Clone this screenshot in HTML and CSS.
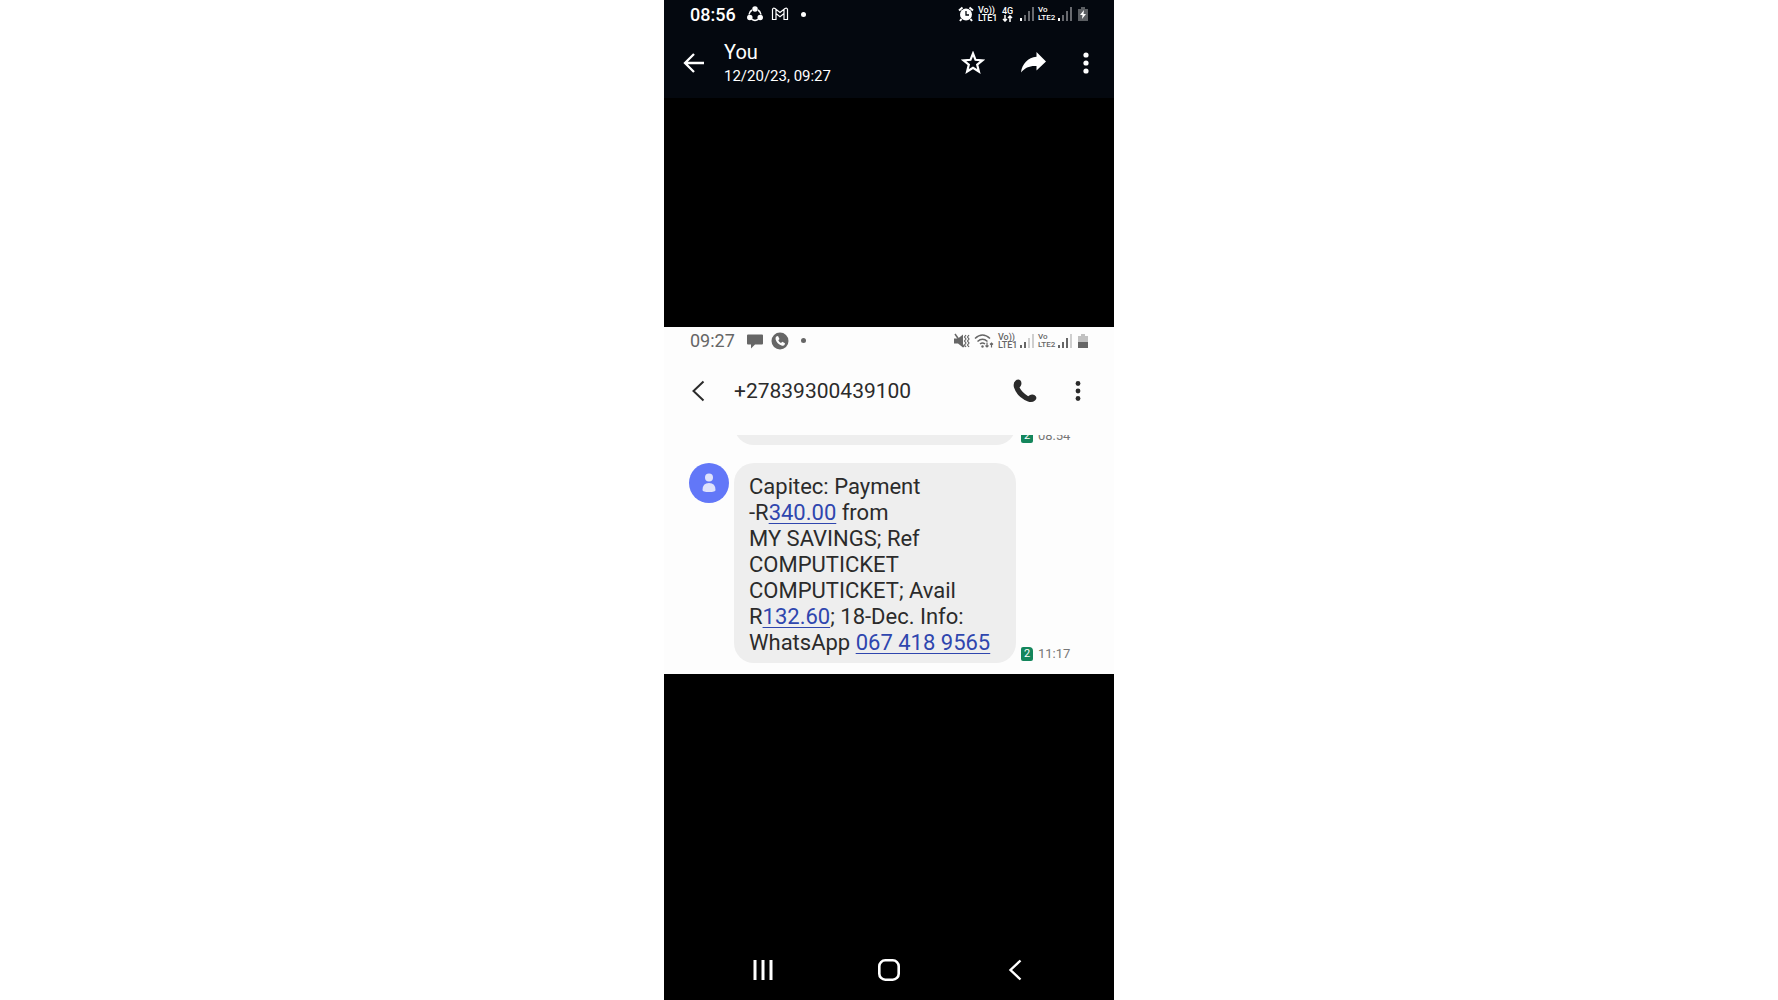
FILE: index.html
```html
<!DOCTYPE html>
<html lang="en">
<head>
  <meta charset="UTF-8">
  <meta name="viewport" content="width=device-width, initial-scale=1.0">
  <title>You</title>
  <link rel="stylesheet" href="styles.css">
</head>
<body>
  <main class="phone">
    <header class="viewer-header">
      <div class="status-bar">
        <div class="status-left">
          <span class="clock">08:56</span>
          <svg width="16" height="16" viewBox="0 0 16 16" fill="none" stroke="currentColor" stroke-width="1.5">
            <path d="M5 4A6 6 0 0 0 2 8.500M4.500 13.200a6 6 0 0 0 7 0M14 8.500A6 6 0 0 0 11 4"/>
            <circle cx="8" cy="3" r="2" fill="currentColor"/>
            <circle cx="2.800" cy="11.500" r="2" fill="currentColor"/>
            <circle cx="13.200" cy="11.500" r="2" fill="currentColor"/>
          </svg>
          <svg width="18" height="16" viewBox="0 0 18 16" fill="none" stroke="currentColor" stroke-width="1.200">
            <path d="M1.500 13.500V3.500Q2 1.500 4 2.500L9 6.500L14 2.500Q16 1.500 16.500 3.500V13.500H13V7.500L9 10.700L5 7.500V13.500ZM5 7.500V3.500M13 7.500V3.500"/>
          </svg>
          <span class="dot"></span>
        </div>
        <div class="status-right">
          <svg width="16" height="16" viewBox="0 0 16 16">
            <circle cx="8" cy="8.500" r="6" fill="currentColor"/>
            <path d="M1 4.500L4.500 1.500M15 4.500L11.500 1.500M3.500 13L2 15M12.500 13L14 15" stroke="currentColor" stroke-width="2"/>
            <path d="M8 5V9H11" fill="none" stroke="#04080f" stroke-width="1.300"/>
          </svg>
          <span class="net net-wide">Vo))<br>LTE1</span>
          <span class="net net-data">4G
            <svg width="11" height="7" viewBox="0 0 11 7" fill="none" stroke="currentColor" stroke-width="1.500"><path d="M3 0V6M1 4L3 6L5 4M8 7V1M6 3L8 1L10 3"/></svg>
          </span>
          <svg width="14" height="14" viewBox="0 0 14 14" fill="currentColor">
            <path d="M0 11h2v3H0z"/><path d="M4 8h2v6H4zM8 4h2v10H8zM12 0h2v14h-2z" opacity=".4"/>
          </svg>
          <span class="net net-tight">Vo<br>LTE2</span>
          <svg width="14" height="14" viewBox="0 0 14 14" fill="currentColor">
            <path d="M0 11h2v3H0z"/><path d="M4 8h2v6H4zM8 4h2v10H8zM12 0h2v14h-2z" opacity=".4"/>
          </svg>
          <svg class="battery" width="10" height="14" viewBox="0 0 10 14">
            <path d="M3 0h4v2h3v12H0V2h3z" fill="currentColor" opacity=".35"/>
            <path d="M6 3L2 8h2.500L4 12L8 7H5.500z" fill="currentColor"/>
          </svg>
        </div>
      </div>
      <div class="viewer-bar">
        <button type="button" class="icon-btn" aria-label="Back">
          <svg width="24" height="24" viewBox="0 0 24 24" fill="none" stroke="currentColor" stroke-width="2.300"><path d="M22 12H4M12 3L3 12L12 21"/></svg>
        </button>
        <div class="sender">
          <h1>You</h1>
          <p>12/20/23, 09:27</p>
        </div>
        <div class="viewer-actions">
          <button type="button" class="icon-btn" aria-label="Star">
            <svg width="24" height="24" viewBox="0 0 24 24" fill="none" stroke="currentColor" stroke-width="2.200"><path d="M12 2.500L14.500 8.800L21.500 9.300L16.200 13.700L17.900 20.500L12 16.800L6.100 20.500L7.800 13.700L2.500 9.300L9.500 8.800Z"/></svg>
          </button>
          <button type="button" class="icon-btn" aria-label="Forward">
            <svg width="26" height="24" viewBox="0 0 26 24" fill="currentColor"><path d="M15.500 1L25 10.500L15.500 19.500V15C9 14.500 4 16.500 0 21.500C1 13 7 6.500 15.500 5.800Z"/></svg>
          </button>
          <button type="button" class="icon-btn" aria-label="More options">
            <svg width="6" height="24" viewBox="0 0 6 24" fill="currentColor"><circle cx="3" cy="4" r="2.600"/><circle cx="3" cy="12" r="2.600"/><circle cx="3" cy="20" r="2.600"/></svg>
          </button>
        </div>
      </div>
    </header>

    <section class="photo">
      <div class="status-bar">
        <div class="status-left">
          <span class="clock">09:27</span>
          <svg width="16" height="16" viewBox="0 0 16 16" fill="currentColor"><path d="M1 1.500h14q1 0 1 1v8q0 1-1 1H8L4 15.500V11.500H1q-1 0-1-1v-8q0-1 1-1z"/></svg>
          <svg width="18" height="18" viewBox="0 0 18 18">
            <circle cx="9" cy="9" r="8.500" fill="currentColor"/>
            <path d="M5.300 4.500L7 4L8.500 7L7.300 8.300Q8.200 10.200 10 11L11.300 9.700L14 11.300L13.500 13Q12.500 14.300 10.500 13.500Q6 11.800 4.600 7.500Q4.200 5.500 5.300 4.500Z" fill="#fdfdfd"/>
          </svg>
          <span class="dot"></span>
        </div>
        <div class="status-right">
          <svg width="16" height="16" viewBox="0 0 16 16" fill="none" stroke="currentColor">
            <path d="M0 5.500h4L9 1.500v13L4 10.500H0z" fill="currentColor" stroke="none"/>
            <path d="M1 1L10 14" stroke-width="1.500"/>
            <path d="M12 2L10.500 4L12 6L10.500 8L12 10L10.500 12L12 14M15 2L13.500 4L15 6L13.500 8L15 10L13.500 12L15 14" stroke-width="1.200"/>
          </svg>
          <svg width="20" height="16" viewBox="0 0 20 16" fill="none" stroke="currentColor" stroke-width="1.500">
            <path d="M1 5.500Q8.500-1.500 16 5.500M3.500 8.500Q8.500 4 13.500 8.500M6 11Q8.500 9 11 11"/>
            <circle cx="8.500" cy="13.500" r="1.200" fill="currentColor" stroke="none"/>
            <path d="M13 9.500V14M11.500 12.500L13 14L14.500 12.500M17.500 14.500V10M16 11.500L17.500 10L19 11.500" stroke-width="1.200"/>
          </svg>
          <span class="net net-wide">Vo))<br>LTE1</span>
          <svg width="14" height="14" viewBox="0 0 14 14" fill="currentColor">
            <path d="M0 11h2v3H0zM4 8h2v6H4z"/><path d="M8 4h2v10H8zM12 0h2v14h-2z" opacity=".3"/>
          </svg>
          <span class="net net-tight">Vo<br>LTE2</span>
          <svg width="14" height="14" viewBox="0 0 14 14" fill="currentColor">
            <path d="M0 11h2v3H0zM4 8h2v6H4zM8 4h2v10H8z"/><path d="M12 0h2v14h-2z" opacity=".3"/>
          </svg>
          <svg class="battery" width="10" height="14" viewBox="0 0 10 14" fill="currentColor">
            <path d="M3 0h4v2h3v6H0V2h3z" opacity=".4"/><path d="M0 8h10v6H0z"/>
          </svg>
        </div>
      </div>

      <div class="chat-bar">
        <button type="button" class="icon-btn" aria-label="Back to messages">
          <svg width="14" height="22" viewBox="0 0 14 22" fill="none" stroke="currentColor" stroke-width="2"><path d="M12.500 1.500L2.500 11L12.500 20.500"/></svg>
        </button>
        <h2>+27839300439100</h2>
        <div class="chat-actions">
          <button type="button" class="icon-btn" aria-label="Call">
            <svg width="24" height="24" viewBox="0 0 24 24" fill="currentColor"><path d="M2.500 1.800Q5-.500 7.500 1.500Q8.800 3 8.300 5.500Q8 7 6.500 8.500Q9.500 14 15.200 17.200Q17 15.500 19 15.500Q21.500 15.300 22.800 17.200Q24.300 19.500 22 21.500Q19 24 15 22.500Q4 18 1 8.500Q-.200 4 2.500 1.800Z"/></svg>
          </button>
          <button type="button" class="icon-btn" aria-label="Chat options">
            <svg width="6" height="22" viewBox="0 0 6 22" fill="currentColor"><circle cx="3" cy="3.500" r="2.400"/><circle cx="3" cy="11" r="2.400"/><circle cx="3" cy="18.500" r="2.400"/></svg>
          </button>
        </div>
      </div>

      <div class="thread">
        <div class="message message-cut">
          <div class="bubble"></div>
          <div class="meta"><span class="sim">2</span><time>08:54</time></div>
        </div>
        <div class="message">
          <svg class="avatar" width="40" height="40" viewBox="0 0 40 40">
            <circle cx="20" cy="20" r="20" fill="#6277f8"/>
            <circle cx="20" cy="14.500" r="4" fill="#dfe2fb"/>
            <path d="M13.500 27Q13.500 20 20 20Q26.500 20 26.500 27Q26.500 29 20 29Q13.500 29 13.500 27Z" fill="#dfe2fb"/>
          </svg>
          <p class="bubble">
            Capitec: Payment<br>
            -R<a href="#">340.00</a> from<br>
            MY SAVINGS; Ref<br>
            COMPUTICKET<br>
            COMPUTICKET; Avail<br>
            R<a href="#">132.60</a>; 18-Dec. Info:<br>
            WhatsApp <a href="tel:0674189565">067 418 9565</a>
          </p>
          <div class="meta"><span class="sim">2</span><time>11:17</time></div>
        </div>
      </div>
    </section>

    <nav class="system-nav">
      <button type="button" class="icon-btn" aria-label="Recent apps">
        <svg width="22" height="22" viewBox="0 0 22 22" stroke="currentColor" stroke-width="3"><path d="M3 1v20M11 1v20M19 1v20"/></svg>
      </button>
      <button type="button" class="icon-btn" aria-label="Home">
        <svg width="24" height="24" viewBox="0 0 24 24" fill="none" stroke="currentColor" stroke-width="2.600"><rect x="2.300" y="2.300" width="19.400" height="19.400" rx="6"/></svg>
      </button>
      <button type="button" class="icon-btn" aria-label="Go back">
        <svg width="14" height="22" viewBox="0 0 14 22" fill="none" stroke="currentColor" stroke-width="2.400"><path d="M12.500 1.500L2.500 11L12.500 20.500"/></svg>
      </button>
    </nav>
  </main>
</body>
</html>
```
FILE: styles.css
```css
* {
  box-sizing: border-box;
}
body {
  margin: 0;
  background: #fff;
  font-family: Roboto, "Liberation Sans", sans-serif;
}
h1, h2, p {
  margin: 0;
  font-weight: 400;
}
svg {
  display: block;
  flex: none;
}

/* the photo row stays centred between header and navigation */
.phone {
  display: grid;
  grid-template-rows: 1fr auto 1fr;
  height: 100vh;
  aspect-ratio: 9 / 20;
  margin: 0 auto;
  background: #000;
  color: #fff;
}
.icon-btn {
  display: flex;
  padding: 0;
  border: none;
  background: none;
  color: inherit;
  cursor: pointer;
}

.viewer-header {
  align-self: start;
  background: #04080f;
}
.status-bar {
  display: flex;
  justify-content: space-between;
  align-items: center;
  height: 28px;
  padding: 0 26px;
}
.status-left {
  display: flex;
  align-items: center;
  gap: 8px;
}
.clock {
  width: 49px;
  font-size: 18px;
  font-weight: 500;
}
.dot {
  width: 5px;
  height: 5px;
  margin-left: 4px;
  border-radius: 50%;
  background: currentColor;
}
.status-right {
  display: flex;
  align-items: center;
  gap: 4px;
}
.net {
  font-size: 9px;
  line-height: 8px;
  font-weight: 500;
  white-space: nowrap;
}
.net-wide {
  width: 18px;
}
.net-data {
  width: 16px;
  padding-left: 2px;
}
.net-tight {
  width: 16px;
  font-size: 8px;
}
.battery {
  margin-left: 2px;
}

.viewer-bar {
  display: flex;
  align-items: center;
  height: 70px;
  padding: 0 25px 0 18px;
}
.sender {
  margin-left: 18px;
}
.sender h1 {
  font-size: 20px;
  line-height: 26px;
}
.sender p {
  font-size: 15px;
  line-height: 22px;
}
.viewer-actions {
  display: flex;
  gap: 36px;
  margin-left: auto;
}

.photo {
  background: #fdfdfd;
  color: #2b2b2b;
}
.photo .status-bar {
  color: #666;
}
.photo .clock {
  font-weight: 400;
}
.chat-bar {
  display: flex;
  align-items: center;
  height: 72px;
  margin-bottom: 8px;
  padding: 0 33px 0 27px;
}
.chat-bar h2 {
  margin-left: 29px;
  font-size: 21px;
}
.chat-actions {
  display: flex;
  align-items: center;
  gap: 38px;
  margin-left: auto;
}

.message {
  display: grid;
  grid-template-columns: 40px 282px 1fr;
  column-gap: 5px;
  padding: 0 20px 11px 25px;
}
.bubble {
  grid-column: 2;
  padding: 11px 15px 7px;
  border-radius: 20px;
  background: #eee;
  font-size: 22px;
  line-height: 26px;
}
.bubble a {
  color: #2f46ae;
  text-decoration-thickness: 1px;
  text-underline-offset: 3px;
}
.meta {
  display: flex;
  align-self: end;
  align-items: center;
  gap: 5px;
  padding-bottom: 2px;
  color: #777;
  font-size: 13px;
  line-height: 14px;
}
.sim {
  width: 12px;
  border-radius: 2px;
  border-top-right-radius: 4px;
  background: #14865c;
  color: #fff;
  font-size: 11px;
  text-align: center;
}
/* older message, scrolled mostly out of view */
.message-cut {
  align-items: end;
  height: 10px;
  margin-bottom: 18px;
  padding-bottom: 0;
  overflow: hidden;
  grid-template-rows: 10px;
}
.message-cut .bubble {
  height: 60px;
}

.system-nav {
  display: grid;
  grid-template-columns: repeat(3, 1fr);
  align-self: end;
  align-items: center;
  justify-items: center;
  height: 60px;
  padding: 0 8%;
}
```
